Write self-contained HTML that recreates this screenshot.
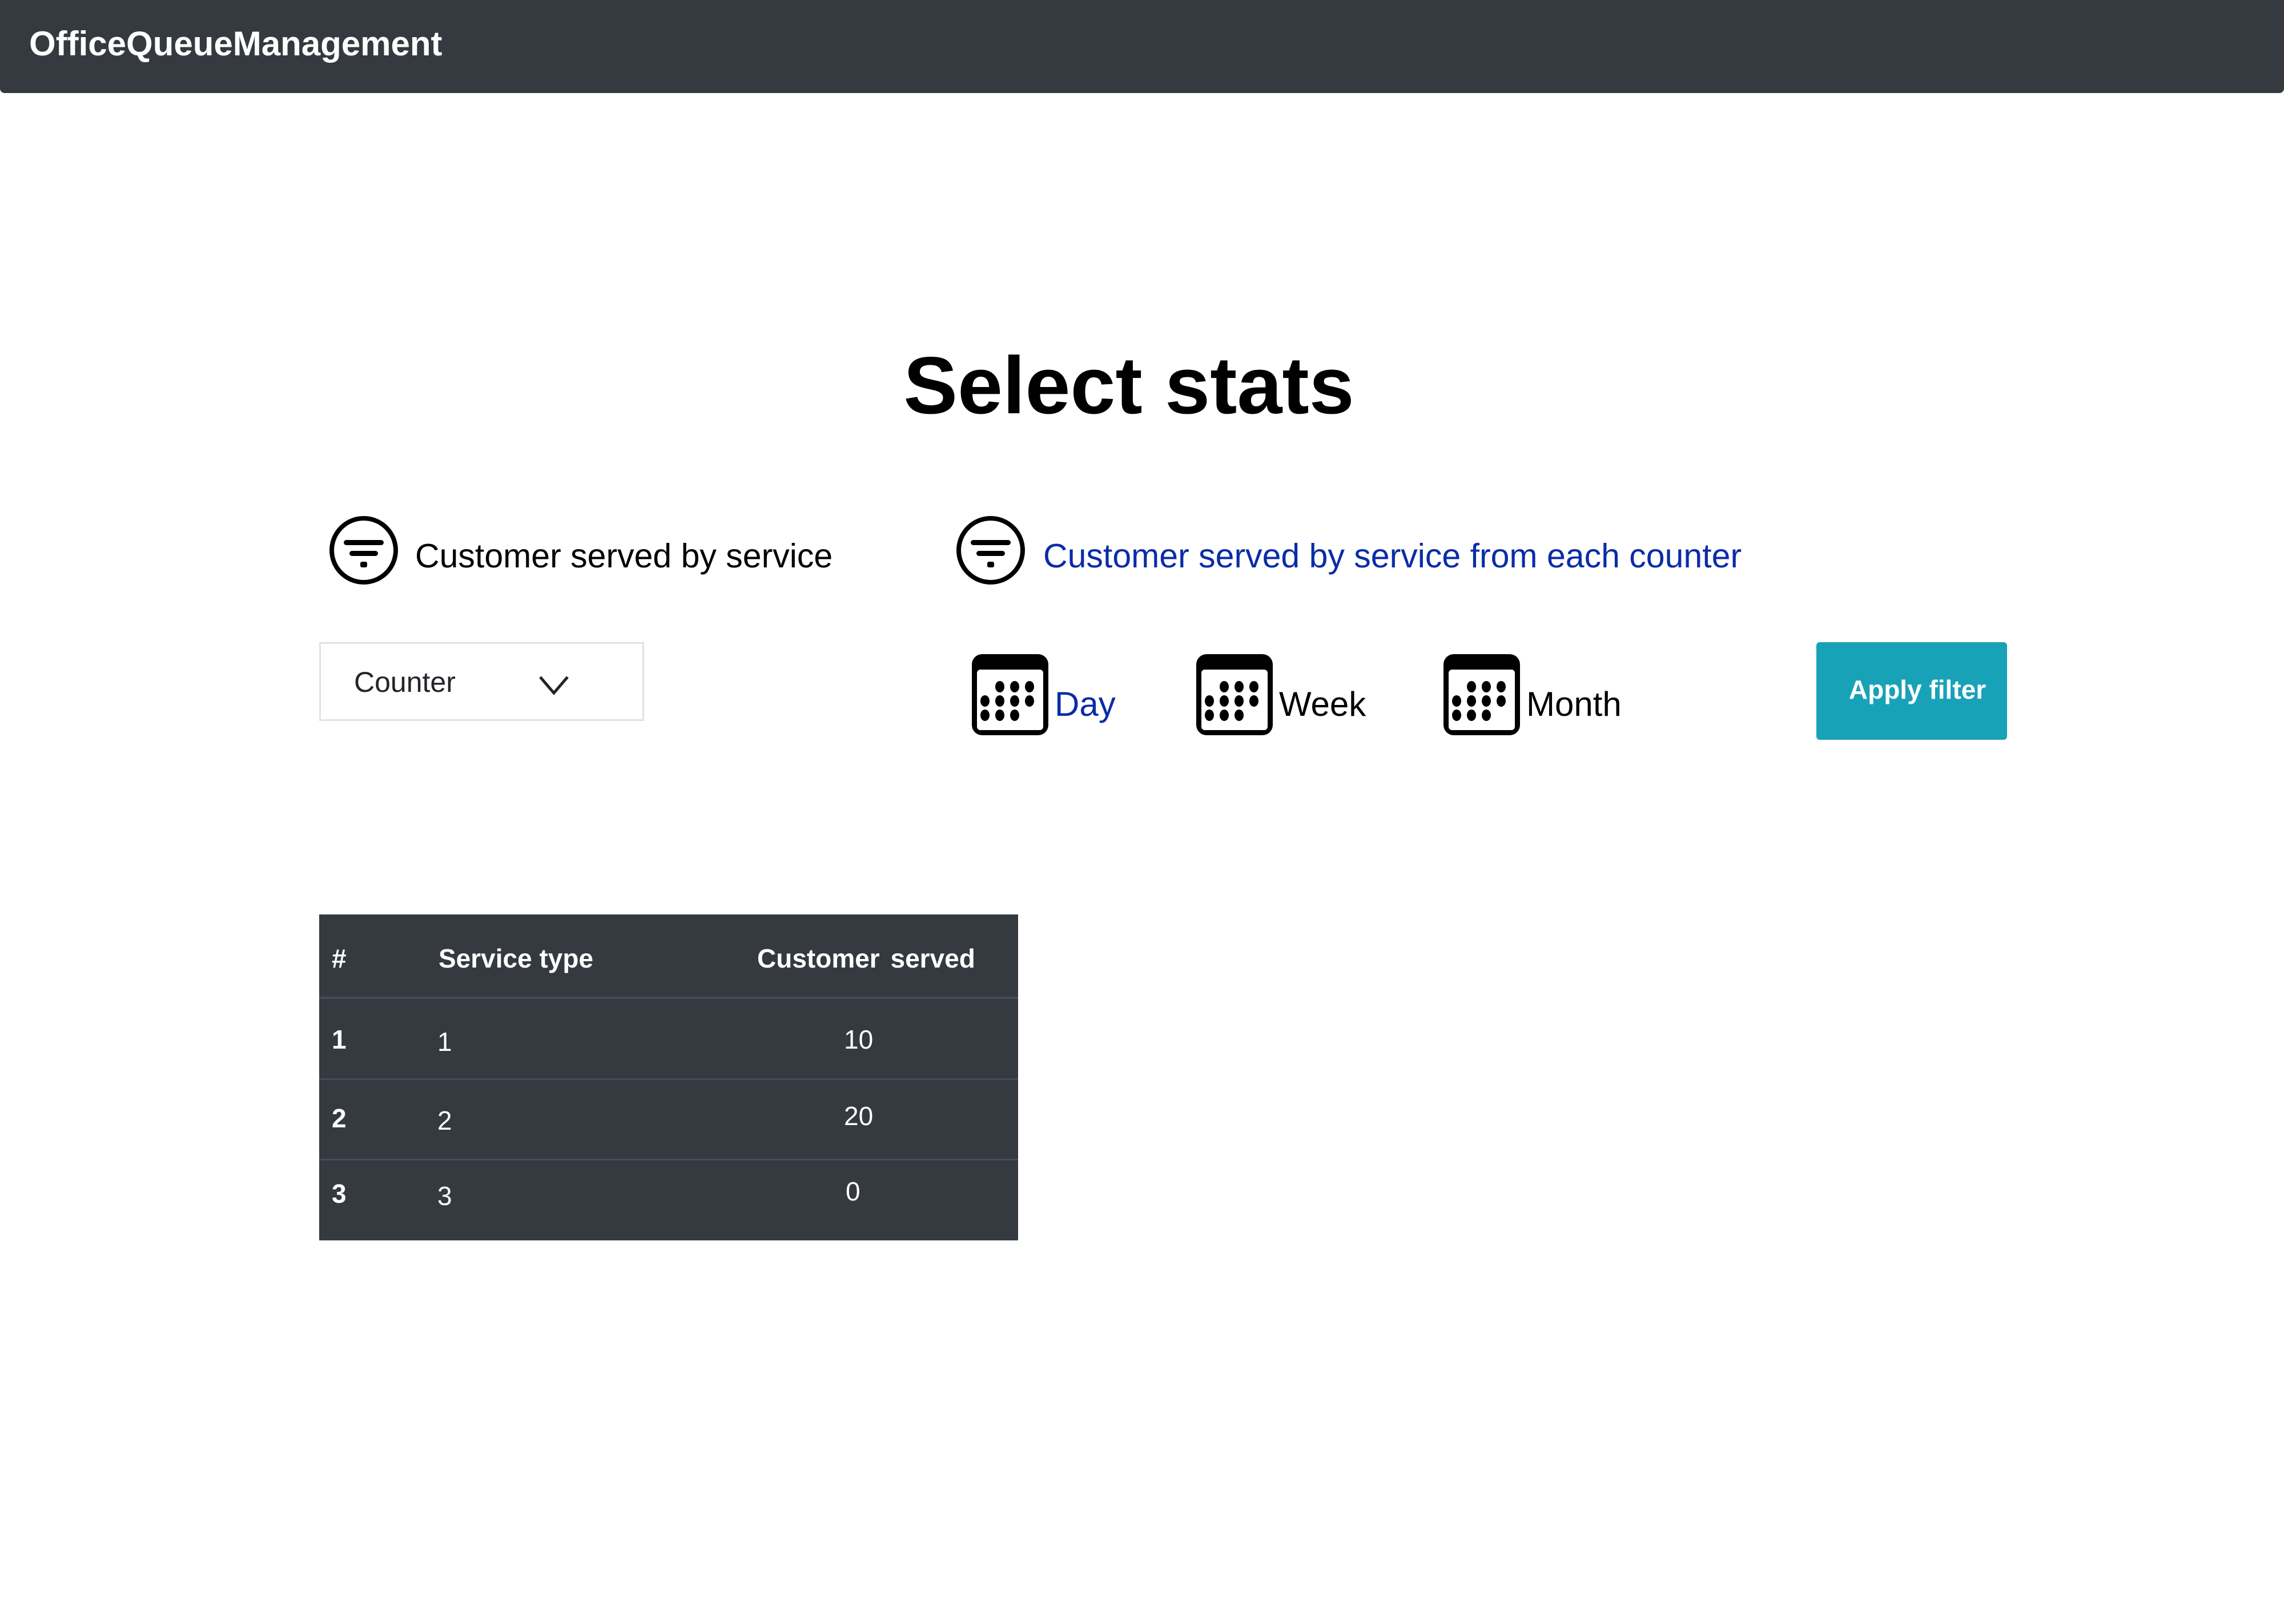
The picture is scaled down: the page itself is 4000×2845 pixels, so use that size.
<!DOCTYPE html>
<html><head><meta charset="utf-8"><style>
*{margin:0;padding:0;box-sizing:border-box}
body{width:4000px;height:2845px;background:#fff;font-family:"Liberation Sans",sans-serif;position:relative;overflow:hidden}
.a{position:absolute;white-space:nowrap}
.nav{left:0;top:0;width:4000px;height:163px;background:#343a40;border-radius:0 0 8px 8px}
.t{line-height:1}
.tbl{left:559px;top:1602px;width:1224px;height:571px;background:#343a40}
.ln{left:559px;width:1224px;height:4px;background:#454d55}
.w{color:#fff;font-size:46px}
</style></head><body>
<div class="a nav"></div>
<div class="a t" style="left:51px;top:47px;font-size:60px;font-weight:bold;color:#fff">OfficeQueueManagement</div>
<div class="a t" style="left:0;width:3954px;text-align:center;top:605px;font-size:142px;font-weight:bold;color:#000">Select stats</div>

<svg class="a" style="left:576px;top:903px" width="122" height="122" viewBox="0 0 122 122"><circle cx="61" cy="61" r="56" fill="none" stroke="#000" stroke-width="8"/><rect x="26" y="43" width="70" height="9" rx="4.5"/><rect x="36" y="62" width="50" height="9" rx="4.5"/><rect x="55" y="81" width="12" height="10" rx="3"/></svg>
<div class="a t" style="left:727px;top:945px;font-size:59px;color:#000">Customer served by service</div>
<svg class="a" style="left:1674px;top:903px" width="122" height="122" viewBox="0 0 122 122"><circle cx="61" cy="61" r="56" fill="none" stroke="#000" stroke-width="8"/><rect x="26" y="43" width="70" height="9" rx="4.5"/><rect x="36" y="62" width="50" height="9" rx="4.5"/><rect x="55" y="81" width="12" height="10" rx="3"/></svg>
<div class="a t" style="left:1827px;top:945px;font-size:59px;color:#0a2ca8">Customer served by service from each counter</div>

<div class="a" style="left:559px;top:1125px;width:569px;height:138px;border:3px solid #dee2e6"></div>
<div class="a t" style="left:620px;top:1170px;font-size:50px;color:#212529">Counter</div>
<svg class="a" style="left:940px;top:1178px" width="60" height="44" viewBox="0 0 60 44"><path d="M6 8 L30 36 L54 8" fill="none" stroke="#212529" stroke-width="5"/></svg>

<svg class="a" style="left:1699px;top:1143px" width="140" height="148" viewBox="0 0 140 148"><rect x="3" y="3" width="134" height="142" rx="18" fill="#000"/><rect x="12" y="30" width="116" height="106" rx="6" fill="#fff"/><g fill="#000"><ellipse cx="52" cy="60" rx="8" ry="10"/><ellipse cx="78" cy="60" rx="8" ry="10"/><ellipse cx="104" cy="60" rx="8" ry="10"/><ellipse cx="26" cy="85" rx="8" ry="10"/><ellipse cx="52" cy="85" rx="8" ry="10"/><ellipse cx="78" cy="85" rx="8" ry="10"/><ellipse cx="104" cy="85" rx="8" ry="10"/><ellipse cx="26" cy="110" rx="8" ry="10"/><ellipse cx="52" cy="110" rx="8" ry="10"/><ellipse cx="78" cy="110" rx="8" ry="10"/></g></svg>
<div class="a t" style="left:1847px;top:1204px;font-size:60px;color:#0a2ca8">Day</div>
<svg class="a" style="left:2092px;top:1143px" width="140" height="148" viewBox="0 0 140 148"><rect x="3" y="3" width="134" height="142" rx="18" fill="#000"/><rect x="12" y="30" width="116" height="106" rx="6" fill="#fff"/><g fill="#000"><ellipse cx="52" cy="60" rx="8" ry="10"/><ellipse cx="78" cy="60" rx="8" ry="10"/><ellipse cx="104" cy="60" rx="8" ry="10"/><ellipse cx="26" cy="85" rx="8" ry="10"/><ellipse cx="52" cy="85" rx="8" ry="10"/><ellipse cx="78" cy="85" rx="8" ry="10"/><ellipse cx="104" cy="85" rx="8" ry="10"/><ellipse cx="26" cy="110" rx="8" ry="10"/><ellipse cx="52" cy="110" rx="8" ry="10"/><ellipse cx="78" cy="110" rx="8" ry="10"/></g></svg>
<div class="a t" style="left:2240px;top:1204px;font-size:60px;color:#000">Week</div>
<svg class="a" style="left:2525px;top:1143px" width="140" height="148" viewBox="0 0 140 148"><rect x="3" y="3" width="134" height="142" rx="18" fill="#000"/><rect x="12" y="30" width="116" height="106" rx="6" fill="#fff"/><g fill="#000"><ellipse cx="52" cy="60" rx="8" ry="10"/><ellipse cx="78" cy="60" rx="8" ry="10"/><ellipse cx="104" cy="60" rx="8" ry="10"/><ellipse cx="26" cy="85" rx="8" ry="10"/><ellipse cx="52" cy="85" rx="8" ry="10"/><ellipse cx="78" cy="85" rx="8" ry="10"/><ellipse cx="104" cy="85" rx="8" ry="10"/><ellipse cx="26" cy="110" rx="8" ry="10"/><ellipse cx="52" cy="110" rx="8" ry="10"/><ellipse cx="78" cy="110" rx="8" ry="10"/></g></svg>
<div class="a t" style="left:2673px;top:1204px;font-size:60px;color:#000">Month</div>

<div class="a" style="left:3181px;top:1125px;width:334px;height:171px;background:#17a2b8;border-radius:6px"></div>
<div class="a t" style="left:3181px;width:354px;text-align:center;top:1185px;font-size:46px;font-weight:bold;color:#fff">Apply filter</div>

<div class="a tbl"></div>
<div class="a ln" style="top:1746px"></div>
<div class="a ln" style="top:1889px;height:3px"></div>
<div class="a ln" style="top:2030px;height:3px"></div>
<div class="a t w" style="left:581px;top:1656px;font-weight:bold">#</div>
<div class="a t w" style="left:768px;top:1656px;font-weight:bold">Service type</div>
<div class="a t w" style="left:1326px;top:1656px;font-weight:bold;word-spacing:6px">Customer served</div>
<div class="a t w" style="left:581px;top:1798px;font-weight:bold">1</div>
<div class="a t w" style="left:766px;top:1802px">1</div>
<div class="a t w" style="left:1478px;top:1798px">10</div>
<div class="a t w" style="left:581px;top:1936px;font-weight:bold">2</div>
<div class="a t w" style="left:766px;top:1940px">2</div>
<div class="a t w" style="left:1478px;top:1932px">20</div>
<div class="a t w" style="left:581px;top:2068px;font-weight:bold">3</div>
<div class="a t w" style="left:766px;top:2072px">3</div>
<div class="a t w" style="left:1481px;top:2064px">0</div>
</body></html>
